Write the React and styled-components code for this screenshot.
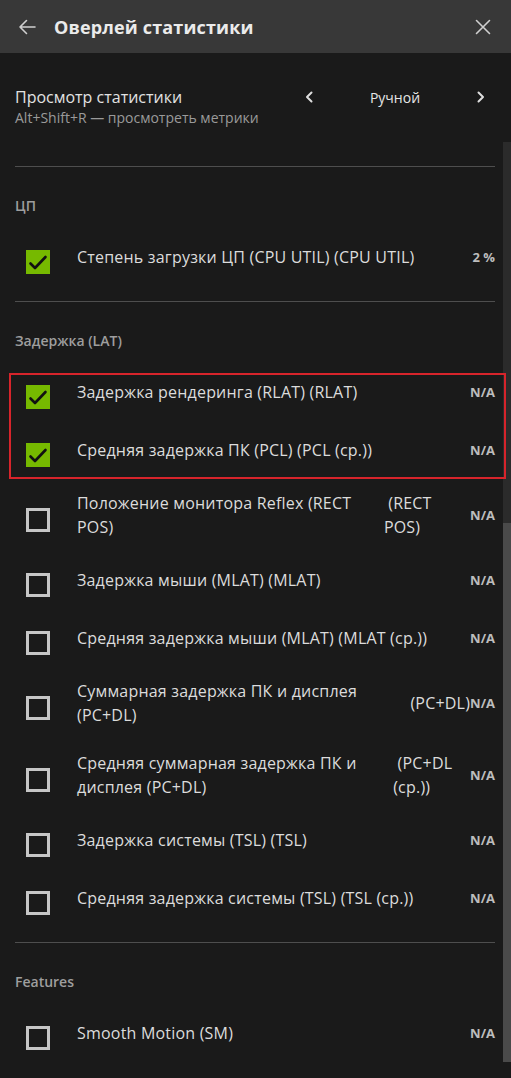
import React from 'react';
import styled, { createGlobalStyle } from 'styled-components';

const GlobalStyle = createGlobalStyle`
  html, body {
    margin: 0;
    padding: 0;
    background: #1a1a1a;
  }
  body {
    font-family: "Open Sans", "Liberation Sans", Arial, sans-serif;
    -webkit-font-smoothing: antialiased;
  }
  * {
    box-sizing: border-box;
  }
`;

const Panel = styled.div`
  width: 511px;
  height: 1078px;
  display: flex;
  flex-direction: column;
  background: #1a1a1a;
  color: #dcdcdc;
  padding-bottom: 16px;
  overflow: hidden;
`;

const Header = styled.header`
  height: 53px;
  flex: none;
  display: flex;
  align-items: center;
  background: #383838;
  padding: 0 20px 0 18px;
`;

const IconButton = styled.span`
  display: flex;
  align-items: center;
  justify-content: center;
  color: #cfcfcf;
`;

const Title = styled.h1`
  flex: 1;
  margin: 0 0 0 18px;
  font-size: 18px;
  font-weight: 700;
  letter-spacing: 0.15px;
  color: #ebebeb;
`;

const Viewer = styled.div`
  flex: none;
  display: flex;
  justify-content: space-between;
  align-items: flex-start;
  padding: 34px 22px 15px 15px;
`;

const ViewerText = styled.div`
  display: flex;
  flex-direction: column;
`;

const ViewerTitle = styled.div`
  font-size: 16px;
  line-height: 20px;
  color: #e2e2e2;
`;

const Hint = styled.div`
  margin-top: 2px;
  font-size: 14px;
  line-height: 18px;
  color: #9a9a9a;
`;

const Selector = styled.div`
  width: 188px;
  height: 20px;
  display: flex;
  align-items: center;
`;

const SelectorValue = styled.span`
  flex: 1;
  text-align: center;
  font-size: 14px;
  color: #e6e6e6;
`;

const ScrollArea = styled.div`
  flex: 1;
  display: flex;
  min-height: 0;
`;

const Content = styled.div`
  flex: 1;
  padding: 24px 8px 0 15px;
  display: flex;
  flex-direction: column;
`;

const Section = styled.section`
  border-top: 1px solid #4e4e4e;
  padding: 29px 0 ${p => (p.$last ? 0 : 15)}px;
`;

const SectionLabel = styled.div`
  font-size: 14px;
  line-height: 20px;
  font-weight: 600;
  color: #9e9e9e;
  margin-bottom: 12px;
`;

const Row = styled.div`
  display: flex;
  align-items: center;
  min-height: 58px;
  padding: 12px 0;
`;

const Box = styled.span`
  flex: none;
  width: 24px;
  height: 24px;
  margin: 10px 27px 0 11px;
  display: flex;
  align-items: center;
  justify-content: center;
  background: ${p => (p.$checked ? '#76b900' : 'transparent')};
  border: ${p => (p.$checked ? 'none' : '3px solid #c6c6c6')};
`;

const TextGroup = styled.div`
  flex: 1;
  min-width: 0;
  display: flex;
  align-items: center;
`;

const Label = styled.span`
  flex: 0 1 auto;
  font-size: 16px;
  line-height: 24px;
  letter-spacing: 0.2px;
  color: #dcdcdc;
`;

const Abbr = styled(Label)``;

const Value = styled.span`
  flex: none;
  font-size: 13px;
  line-height: 24px;
  font-weight: 700;
  color: #bdbdbd;
  text-align: right;
`;

const Highlight = styled.div`
  position: relative;

  &::after {
    content: '';
    position: absolute;
    top: 10px;
    left: -6px;
    right: -11px;
    bottom: 0;
    border: 2px solid #d7242b;
    pointer-events: none;
  }
`;

const Track = styled.div`
  flex: none;
  width: 8px;
  display: flex;
  flex-direction: column;
  background: #2b2b2b;
`;

const Thumb = styled.div`
  margin-top: auto;
  background: #4a4a4a;
`;

const BackIcon = () => (
  <svg width="18" height="16" viewBox="0 0 18 16" fill="none" stroke="currentColor" strokeWidth="1.6" strokeLinecap="round" strokeLinejoin="round">
    <path d="M17 8H2M8.5 1.5L2 8l6.5 6.5" />
  </svg>
);

const CloseIcon = () => (
  <svg width="16" height="16" viewBox="0 0 16 16" fill="none" stroke="currentColor" strokeWidth="1.6" strokeLinecap="round">
    <path d="M1.5 1.5l13 13M14.5 1.5l-13 13" />
  </svg>
);

const Chevron = ({ dir }) => (
  <svg width="16" height="12" viewBox="0 0 16 12" fill="none" stroke="#dedede" strokeWidth="2" strokeLinecap="round" strokeLinejoin="round">
    {dir === 'left' ? <path d="M10.5 1.5L6 6l4.5 4.5" /> : <path d="M5.5 1.5L10 6l-4.5 4.5" />}
  </svg>
);

const Check = () => (
  <svg width="24" height="24" viewBox="0 0 24 24" fill="none" stroke="#111" strokeWidth="2.6" strokeLinecap="round" strokeLinejoin="round">
    <path d="M4.5 13.5l4.5 4.5 10.5-11" />
  </svg>
);

const Metric = ({ checked, label, abbr, value = 'N/A' }) => (
  <Row>
    <Box $checked={checked}>{checked && <Check />}</Box>
    <TextGroup>
      <Label>{label}</Label>
      <Abbr>{'\u00a0' + abbr}</Abbr>
    </TextGroup>
    <Value>{value}</Value>
  </Row>
);

const latency = [
  { label: 'Положение монитора Reflex (RECT POS)', abbr: '(RECT POS)' },
  { label: 'Задержка мыши (MLAT)', abbr: '(MLAT)' },
  { label: 'Средняя задержка мыши (MLAT)', abbr: '(MLAT (ср.))' },
  { label: 'Суммарная задержка ПК и дисплея (PC+DL)', abbr: '(PC+DL)' },
  { label: 'Средняя суммарная задержка ПК и дисплея (PC+DL)', abbr: '(PC+DL (ср.))' },
  { label: 'Задержка системы (TSL)', abbr: '(TSL)' },
  { label: 'Средняя задержка системы (TSL)', abbr: '(TSL (ср.))' },
];

const App = () => {
  const visible = 920 * 0.586;

  return (
    <Panel>
      <GlobalStyle />
      <Header>
        <IconButton><BackIcon /></IconButton>
        <Title>Оверлей статистики</Title>
        <IconButton><CloseIcon /></IconButton>
      </Header>

      <Viewer>
        <ViewerText>
          <ViewerTitle>Просмотр статистики</ViewerTitle>
          <Hint>Alt+Shift+R — просмотреть метрики</Hint>
        </ViewerText>
        <Selector>
          <Chevron dir="left" />
          <SelectorValue>Ручной</SelectorValue>
          <Chevron dir="right" />
        </Selector>
      </Viewer>

      <ScrollArea>
        <Content>
          <Section>
            <SectionLabel>ЦП</SectionLabel>
            <Metric checked label="Степень загрузки ЦП (CPU UTIL)" abbr="(CPU UTIL)" value="2 %" />
          </Section>

          <Section>
            <SectionLabel>Задержка (LAT)</SectionLabel>
            <Highlight>
              <Metric checked label="Задержка рендеринга (RLAT)" abbr="(RLAT)" />
              <Metric checked label="Средняя задержка ПК (PCL)" abbr="(PCL (ср.))" />
            </Highlight>
            {latency.map(m => (
              <Metric key={m.label} label={m.label} abbr={m.abbr} />
            ))}
          </Section>

          <Section $last>
            <SectionLabel>Features</SectionLabel>
            <Metric label="Smooth Motion (SM)" abbr="" />
          </Section>
        </Content>

        <Track>
          <Thumb style={{ height: `${visible}px` }} />
        </Track>
      </ScrollArea>
    </Panel>
  );
};

export default App;
